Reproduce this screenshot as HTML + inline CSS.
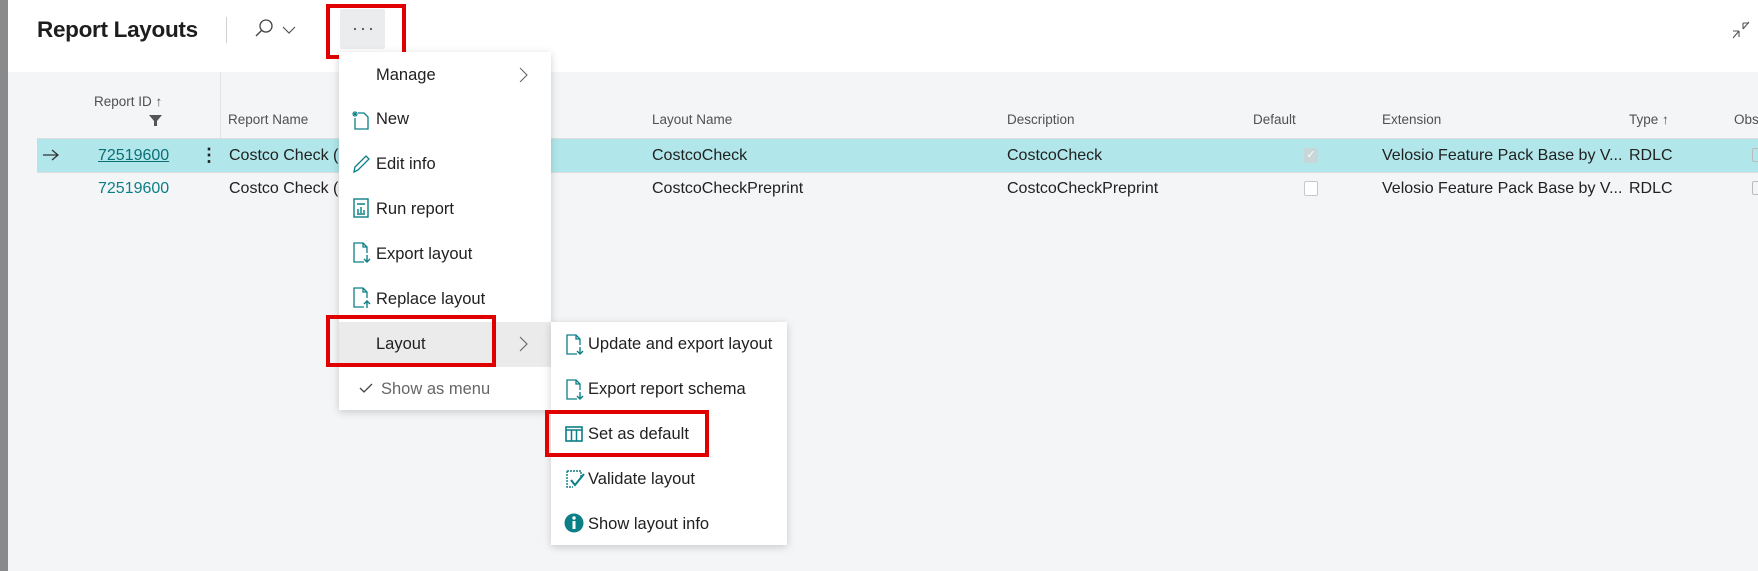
<!DOCTYPE html>
<html><head><style>
*{margin:0;padding:0;box-sizing:border-box}
body{width:1758px;height:571px;overflow:hidden;background:#f4f5f7;font-family:"Liberation Sans",sans-serif;position:relative;color:#212121}
.a{position:absolute;white-space:nowrap}
.hdr{left:8px;top:0;width:1750px;height:72px;background:#fff}
.th{font-size:13.5px;color:#505050;top:112px}
.row{font-size:16px;color:#212121}
.menu{background:#fff;box-shadow:0 2px 8px rgba(0,0,0,.18)}
.mi{font-size:16.5px;color:#212121}
.red{border:4.5px solid #e00000}
.ic{position:absolute}
</style></head><body>
<div class="a" style="left:0;top:0;width:8px;height:571px;background:#8a8a8a"></div>
<div class="a hdr"></div>
<div class="a" style="left:37px;top:17px;font-size:22.5px;font-weight:bold;color:#1d1d1d;letter-spacing:-0.3px">Report Layouts</div>
<div class="a" style="left:226px;top:17px;width:1px;height:26px;background:#d0d0d0"></div>
<svg class="ic" style="left:254px;top:18px" width="20" height="20" viewBox="0 0 20 20"><circle cx="12" cy="8" r="6" fill="none" stroke="#444" stroke-width="1.3"/><path d="M8 12 L2 18" stroke="#444" stroke-width="1.4"/></svg>
<svg class="ic" style="left:282px;top:26px" width="14" height="9" viewBox="0 0 14 9"><path d="M1 1 L7 7 L13 1" fill="none" stroke="#555" stroke-width="1.2"/></svg>
<div class="a" style="left:340px;top:9px;width:45px;height:40px;background:#ebecee;border-radius:2px"></div>
<svg class="ic" style="left:352px;top:27px" width="22" height="4" viewBox="0 0 22 4"><circle cx="3" cy="2" r="1.1" fill="#555"/><circle cx="11" cy="2" r="1.1" fill="#555"/><circle cx="19" cy="2" r="1.1" fill="#555"/></svg>
<div class="a red" style="left:326px;top:4px;width:80px;height:55px"></div>
<svg class="ic" style="left:1732px;top:21px" width="18" height="18" viewBox="0 0 18 18"><path d="M11 2 L17 2 M11 2 L11 8 M11 8 L17 1 M7 10 L1 17 M7 10 L7 16 M7 10 L1 10" fill="none" stroke="#555" stroke-width="1.1"/></svg>

<div class="a" style="left:220px;top:72px;width:1px;height:66px;background:#e2e2e2"></div>
<div class="a th" style="left:94px;top:94px">Report ID ↑</div>
<svg class="ic" style="left:149px;top:114px" width="13" height="13" viewBox="0 0 13 13"><path d="M0 1 L13 1 L8 7 L8 12 L5 12 L5 7 Z" fill="#555"/></svg>
<div class="a th" style="left:228px">Report Name</div>
<div class="a th" style="left:652px">Layout Name</div>
<div class="a th" style="left:1007px">Description</div>
<div class="a th" style="left:1253px">Default</div>
<div class="a th" style="left:1382px">Extension</div>
<div class="a th" style="left:1629px">Type ↑</div>
<div class="a th" style="left:1734px">Obs</div>
<div class="a" style="left:37px;top:138px;width:1721px;height:1px;background:#dcdcdc"></div>
<div class="a" style="left:37px;top:139px;width:1721px;height:33px;background:#b1e7ea"></div>
<div class="a" style="left:37px;top:172px;width:1721px;height:1px;background:#dedede"></div>
<svg class="ic" style="left:43px;top:149px" width="16" height="12" viewBox="0 0 16 12"><path d="M0 6 L15 6 M9 1 L15 6 L9 11" fill="none" stroke="#333" stroke-width="1.3"/></svg>
<div class="a row" style="left:98px;top:147px;color:#0b6f76;text-decoration:underline">72519600</div>
<div class="a row" style="left:200px;top:145px;font-weight:bold;font-size:18px">⋮</div>
<div class="a row" style="left:229px;top:147px">Costco Check (S</div>
<div class="a row" style="left:652px;top:147px">CostcoCheck</div>
<div class="a row" style="left:1007px;top:147px">CostcoCheck</div>
<div class="a" style="left:1304px;top:148px;width:14px;height:15px;background:#c8d6d8;border-radius:2px;color:#fff;font-size:11px;text-align:center;line-height:15px">✓</div>
<div class="a row" style="left:1382px;top:147px">Velosio Feature Pack Base by V...</div>
<div class="a row" style="left:1629px;top:147px">RDLC</div>
<div class="a row" style="left:98px;top:180px;color:#0b7f86">72519600</div>
<div class="a row" style="left:229px;top:180px">Costco Check (S</div>
<div class="a row" style="left:652px;top:180px">CostcoCheckPreprint</div>
<div class="a row" style="left:1007px;top:180px">CostcoCheckPreprint</div>
<div class="a" style="left:1304px;top:181px;width:14px;height:15px;border:1px solid #c8c8c8;border-radius:2px;background:#fff"></div>
<div class="a row" style="left:1382px;top:180px">Velosio Feature Pack Base by V...</div>
<div class="a row" style="left:1629px;top:180px">RDLC</div>
<div class="a" style="left:1752px;top:148px;width:8px;height:14px;border:1px solid #bbb;border-radius:2px"></div>
<div class="a" style="left:1752px;top:181px;width:8px;height:14px;border:1px solid #bbb;border-radius:2px"></div>

<div class="a menu" style="left:339px;top:52px;width:212px;height:358px"></div>
<div class="a" style="left:339px;top:322px;width:212px;height:45px;background:#ebebeb"></div>
<div class="a mi" style="left:376px;top:66px">Manage</div>
<svg class="ic" style="left:519px;top:67px" width="9" height="16" viewBox="0 0 9 16"><path d="M1 1 L8 8 L1 15" fill="none" stroke="#666" stroke-width="1.1"/></svg>
<svg class="ic" style="left:351px;top:110px" width="18" height="20" viewBox="0 0 18 20"><path d="M7 3 L13 3 L17 7 L17 19 L4 19 L4 8" fill="none" stroke="#0b7f86" stroke-width="1.3"/><path d="M4 1 L4 7 M1 4 L7 4 M2 2 L6 6 M6 2 L2 6" stroke="#0b7f86" stroke-width="1"/></svg>
<div class="a mi" style="left:376px;top:110px">New</div>
<svg class="ic" style="left:352px;top:154px" width="18" height="20" viewBox="0 0 18 20"><path d="M2 18 L3 13 L14 2 L17 5 L6 16 Z M2 18 L6 16" fill="none" stroke="#0b7f86" stroke-width="1.3"/></svg>
<div class="a mi" style="left:376px;top:155px">Edit info</div>
<svg class="ic" style="left:353px;top:198px" width="16" height="20" viewBox="0 0 16 20"><rect x="1" y="1" width="14" height="18" fill="none" stroke="#0b7f86" stroke-width="1.4"/><path d="M4 6 L12 6 M5 15 L5 11 M8 15 L8 9 M11 15 L11 12 M4 16 L12 16" stroke="#0b7f86" stroke-width="1.4"/></svg>
<div class="a mi" style="left:376px;top:200px">Run report</div>
<svg class="ic" style="left:353px;top:242px" width="18" height="22" viewBox="0 0 18 22"><path d="M11 20 L1 20 L1 1 L10 1 L14 5 L14 11 M10 1 L10 5 L14 5" fill="none" stroke="#0b7f86" stroke-width="1.3"/><path d="M14 13 L14 20 M11 17 L14 20 L17 17" fill="none" stroke="#0b7f86" stroke-width="1.4"/></svg>
<div class="a mi" style="left:376px;top:245px">Export layout</div>
<svg class="ic" style="left:353px;top:287px" width="18" height="22" viewBox="0 0 18 22"><path d="M11 20 L1 20 L1 1 L10 1 L14 5 L14 11 M10 1 L10 5 L14 5" fill="none" stroke="#0b7f86" stroke-width="1.3"/><path d="M14 21 L14 14 M11 17 L14 14 L17 17" fill="none" stroke="#0b7f86" stroke-width="1.4"/></svg>
<div class="a mi" style="left:376px;top:290px">Replace layout</div>
<div class="a mi" style="left:376px;top:335px">Layout</div>
<svg class="ic" style="left:519px;top:336px" width="9" height="16" viewBox="0 0 9 16"><path d="M1 1 L8 8 L1 15" fill="none" stroke="#666" stroke-width="1.1"/></svg>
<svg class="ic" style="left:359px;top:383px" width="14" height="11" viewBox="0 0 14 11"><path d="M1 5 L5 9 L13 1" fill="none" stroke="#444" stroke-width="1.3"/></svg>
<div class="a mi" style="left:381px;top:380px;color:#666">Show as menu</div>
<div class="a red" style="left:326px;top:315px;width:170px;height:52px"></div>

<div class="a menu" style="left:551px;top:322px;width:236px;height:223px"></div>
<svg class="ic" style="left:566px;top:334px" width="18" height="22" viewBox="0 0 18 22"><path d="M11 20 L1 20 L1 1 L10 1 L14 5 L14 11 M10 1 L10 5 L14 5" fill="none" stroke="#0b7f86" stroke-width="1.3"/><path d="M14 13 L14 20 M11 17 L14 20 L17 17" fill="none" stroke="#0b7f86" stroke-width="1.4"/></svg>
<div class="a mi" style="left:588px;top:335px">Update and export layout</div>
<svg class="ic" style="left:566px;top:379px" width="18" height="22" viewBox="0 0 18 22"><path d="M11 20 L1 20 L1 1 L10 1 L14 5 L14 11 M10 1 L10 5 L14 5" fill="none" stroke="#0b7f86" stroke-width="1.3"/><path d="M14 13 L14 20 M11 17 L14 20 L17 17" fill="none" stroke="#0b7f86" stroke-width="1.4"/></svg>
<div class="a mi" style="left:588px;top:380px">Export report schema</div>
<svg class="ic" style="left:565px;top:426px" width="18" height="16" viewBox="0 0 18 16"><rect x="1" y="1" width="16" height="14" fill="none" stroke="#0b7f86" stroke-width="1.6"/><path d="M1 4 L17 4 M6.5 4 L6.5 15 M11.5 4 L11.5 15" stroke="#0b7f86" stroke-width="1.5"/></svg>
<div class="a mi" style="left:588px;top:425px">Set as default</div>
<div class="a red" style="left:545px;top:410px;width:164px;height:47px"></div>
<svg class="ic" style="left:565px;top:469px" width="20" height="20" viewBox="0 0 20 20"><path d="M2 2 L16 2 L16 8 M2 2 L2 18 L8 18" fill="none" stroke="#0b7f86" stroke-width="1.4" stroke-dasharray="2 1"/><path d="M6 11 L10 16 L19 5" fill="none" stroke="#0b7f86" stroke-width="2"/></svg>
<div class="a mi" style="left:588px;top:470px">Validate layout</div>
<svg class="ic" style="left:564px;top:513px" width="20" height="20" viewBox="0 0 20 20"><circle cx="10" cy="10" r="9.5" fill="#0b7f86"/><rect x="8.5" y="8" width="3" height="8" fill="#fff"/><circle cx="10" cy="5" r="1.7" fill="#fff"/></svg>
<div class="a mi" style="left:588px;top:515px">Show layout info</div>
</body></html>
